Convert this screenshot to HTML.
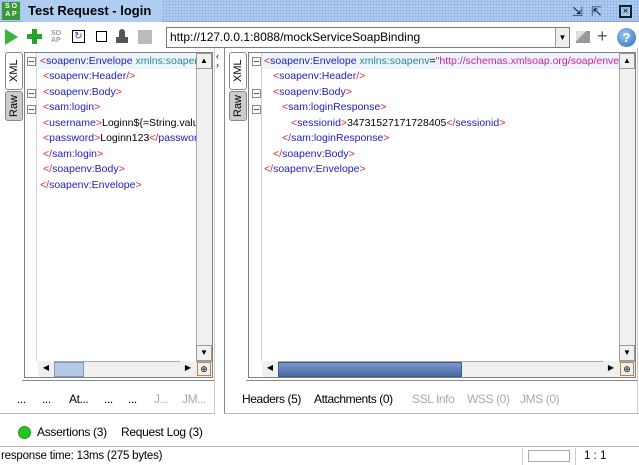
<!DOCTYPE html>
<html><head><style>
*{margin:0;padding:0;box-sizing:border-box}
body{width:639px;height:465px;background:#fff;font-family:"Liberation Sans","DejaVu Sans",sans-serif;font-size:11px;position:relative;overflow:hidden;color:#000}
.a{position:absolute}
.title{left:0;top:0;width:639px;height:22px;background:#aecdf0;background-image:radial-gradient(#8fb4e0 0.8px,transparent 1px);background-size:3px 3px;border-bottom:1px solid #8aa9d0}
.tt{left:22px;top:0;height:22px;width:140px;background:#aecdf0;font-weight:bold;font-size:13px;line-height:22px;padding-left:6px}
.ed{border:1px solid #808080;background:#fff}
.gut{border-right:1px solid #d0d0d0}
.ln{position:absolute;white-space:nowrap;font-size:10.5px;line-height:16px}
.t{color:#e02020}.n{color:#2020c0}.at{color:#2a8a8a}.v{color:#d020a0}
.box{position:absolute;width:9px;height:9px;border:1px solid #888;background:#fff}
.box:after{content:"";position:absolute;left:1px;top:3px;width:5px;height:1px;background:#555}
.vs{background:#f0f0f0;border-left:1px solid #aaa}
.btn{position:absolute;width:16px;height:16px;background:#f0f0f0;border:1px solid #999;font-size:8px;text-align:center;line-height:14px}
.vt{position:absolute;writing-mode:vertical-rl;transform:rotate(180deg);font-size:11px;text-align:center;border:1px solid #888;border-radius:3px}
.tab{position:absolute;font-size:12px;top:392px;letter-spacing:-0.4px;white-space:nowrap}
.g{color:#aaa}
</style></head><body>
<div class="a title"></div>
<div class="a" style="left:2px;top:2px;width:18px;height:18px;background:#3a9a3a;color:#fff;font-size:7px;font-weight:bold;line-height:8px;text-align:center;padding-top:1px">S O<br>A P</div>
<div class="a tt">Test Request - login</div>
<div class="a" style="left:572px;top:4px;font-size:13px;color:#123">⇲</div>
<div class="a" style="left:591px;top:4px;font-size:13px;color:#123">⇱</div>
<div class="a" style="left:619px;top:5px;width:13px;height:13px;border:2px solid #123;font-size:10px;line-height:9px;text-align:center">×</div>
<!-- toolbar -->
<div class="a" style="left:5px;top:29px;width:0;height:0;border-left:13px solid #3cb43c;border-top:8px solid transparent;border-bottom:8px solid transparent"></div>
<div class="a" style="left:27px;top:34px;width:15px;height:5px;background:#2ca02c"></div>
<div class="a" style="left:32px;top:29px;width:5px;height:15px;background:#2ca02c"></div>
<div class="a" style="left:51px;top:30px;font-size:7px;line-height:7px;color:#999;font-weight:bold">SO<br>AP</div>
<div class="a" style="left:72px;top:30px;width:13px;height:13px;border:1px solid #000;color:#2050a0;font-size:10px;line-height:11px;text-align:center">↻</div>
<div class="a" style="left:96px;top:31px;width:11px;height:11px;border:1px solid #000"></div>
<div class="a" style="left:119px;top:29px;width:6px;height:8px;background:#555;border-radius:3px 3px 0 0"></div>
<div class="a" style="left:116px;top:37px;width:12px;height:6px;background:#555"></div>
<div class="a" style="left:138px;top:30px;width:14px;height:14px;background:#bbb"></div>
<div class="a" style="left:166px;top:27px;width:404px;height:21px;border:1px solid #7a7a7a;font-size:12px;line-height:19px;padding-left:3px">http://127.0.0.1:8088/mockServiceSoapBinding</div>
<div class="a" style="left:555px;top:28px;width:14px;height:19px;border-left:1px solid #999;background:#eee;font-size:8px;text-align:center;line-height:19px">▼</div>
<div class="a" style="left:576px;top:31px;width:14px;height:12px;background:linear-gradient(135deg,#ddd 40%,#999 40%)"></div>
<div class="a" style="left:597px;top:26px;font-size:18px;color:#555">+</div>
<div class="a" style="left:617px;top:28px;width:19px;height:19px;border-radius:50%;background:radial-gradient(circle at 40% 35%,#9cc6f0,#2a6ab8);color:#fff;font-weight:bold;font-size:13px;text-align:center;line-height:19px">?</div>
<!-- left editor -->
<div class="vt" style="left:5px;top:52px;width:18px;height:38px;background:#fff;line-height:16px">XML</div>
<div class="vt" style="left:5px;top:91px;width:18px;height:30px;background:#ccc;line-height:16px">Raw</div>
<div class="a ed" style="left:24px;top:52px;width:189px;height:326px"></div>
<div class="a gut" style="left:25px;top:53px;width:12px;height:308px"></div>
<div class="a" style="left:38px;top:53px;width:158px;height:16px;background:#eef4fc"></div>
<div class="box" style="left:27px;top:57px"></div><div class="box" style="left:27px;top:89px"></div><div class="box" style="left:27px;top:105px"></div>
<div style="position:absolute;left:38px;top:53px;width:158px;height:300px;overflow:hidden">
<div class="ln" style="left:2px;top:0"><span class="t">&lt;</span><span class="n">soapenv:Envelope </span><span class="at">xmlns:soapenv</span></div>
<div class="ln" style="left:5px;top:15px"><span class="t">&lt;</span><span class="n">soapenv:Header</span><span class="t">/&gt;</span></div>
<div class="ln" style="left:5px;top:31px"><span class="t">&lt;</span><span class="n">soapenv:Body</span><span class="t">&gt;</span></div>
<div class="ln" style="left:5px;top:46px"><span class="t">&lt;</span><span class="n">sam:login</span><span class="t">&gt;</span></div>
<div class="ln" style="left:5px;top:62px"><span class="t">&lt;</span><span class="n">username</span><span class="t">&gt;</span>Loginn${=String.valueOf</div>
<div class="ln" style="left:5px;top:77px"><span class="t">&lt;</span><span class="n">password</span><span class="t">&gt;</span>Loginn123<span class="t">&lt;/</span><span class="n">password</span></div>
<div class="ln" style="left:5px;top:93px"><span class="t">&lt;/</span><span class="n">sam:login</span><span class="t">&gt;</span></div>
<div class="ln" style="left:5px;top:108px"><span class="t">&lt;/</span><span class="n">soapenv:Body</span><span class="t">&gt;</span></div>
<div class="ln" style="left:2px;top:124px"><span class="t">&lt;/</span><span class="n">soapenv:Envelope</span><span class="t">&gt;</span></div>
</div>
<div class="a vs" style="left:196px;top:53px;width:16px;height:308px"></div>
<div class="btn" style="left:196px;top:53px">▲</div><div class="btn" style="left:196px;top:345px">▼</div>
<div class="a" style="left:38px;top:361px;width:174px;height:16px;background:#f0f0f0;border-top:1px solid #aaa"></div>
<div class="btn" style="left:38px;top:361px;border:none">◀</div>
<div class="a" style="left:54px;top:362px;width:30px;height:15px;background:#b5c9e8;border:1px solid #7d97c0"></div>
<div class="btn" style="left:180px;top:361px;border:none">▶</div>
<div class="a" style="left:197px;top:362px;width:14px;height:14px;border:1px solid #c08040;font-size:9px;line-height:12px;text-align:center">⊕</div>
<div class="a" style="left:22px;top:380px;width:192px;height:1px;background:#888"></div>
<div class="a" style="left:214px;top:48px;width:1px;height:366px;background:#ccc"></div>
<div class="a" style="left:0;top:413px;width:215px;height:1px;background:#bbb"></div>
<div class="tab" style="left:17px">...</div><div class="tab" style="left:42px">...</div><div class="tab" style="left:69px">At...</div><div class="tab" style="left:104px">...</div><div class="tab" style="left:128px">...</div><div class="tab g" style="left:154px">J...</div><div class="tab g" style="left:182px">JM...</div>
<!-- splitter -->
<div class="a" style="left:216px;top:52px;font-size:9px;line-height:9px">‹<br>›</div>
<!-- right editor -->
<div class="a" style="left:224px;top:48px;width:1px;height:366px;background:#888"></div>
<div class="vt" style="left:229px;top:52px;width:18px;height:38px;background:#fff;line-height:16px">XML</div>
<div class="vt" style="left:229px;top:91px;width:18px;height:30px;background:#ccc;line-height:16px">Raw</div>
<div class="a ed" style="left:248px;top:52px;width:388px;height:326px"></div>
<div class="a gut" style="left:249px;top:53px;width:13px;height:308px"></div>
<div class="a" style="left:262px;top:53px;width:357px;height:16px;background:#eef4fc"></div>
<div class="box" style="left:252px;top:57px"></div><div class="box" style="left:252px;top:89px"></div><div class="box" style="left:252px;top:105px"></div>
<div style="position:absolute;left:262px;top:53px;width:357px;height:300px;overflow:hidden">
<div class="ln" style="left:2px;top:0"><span class="t">&lt;</span><span class="n">soapenv:Envelope </span><span class="at">xmlns:soapenv</span>=<span class="v">"http://schemas.xmlsoap.org/soap/envelope/"</span></div>
<div class="ln" style="left:11px;top:15px"><span class="t">&lt;</span><span class="n">soapenv:Header</span><span class="t">/&gt;</span></div>
<div class="ln" style="left:11px;top:31px"><span class="t">&lt;</span><span class="n">soapenv:Body</span><span class="t">&gt;</span></div>
<div class="ln" style="left:20px;top:46px"><span class="t">&lt;</span><span class="n">sam:loginResponse</span><span class="t">&gt;</span></div>
<div class="ln" style="left:29px;top:62px"><span class="t">&lt;</span><span class="n">sessionid</span><span class="t">&gt;</span>34731527171728405<span class="t">&lt;/</span><span class="n">sessionid</span><span class="t">&gt;</span></div>
<div class="ln" style="left:20px;top:77px"><span class="t">&lt;/</span><span class="n">sam:loginResponse</span><span class="t">&gt;</span></div>
<div class="ln" style="left:11px;top:93px"><span class="t">&lt;/</span><span class="n">soapenv:Body</span><span class="t">&gt;</span></div>
<div class="ln" style="left:2px;top:108px"><span class="t">&lt;/</span><span class="n">soapenv:Envelope</span><span class="t">&gt;</span></div>
</div>
<div class="a vs" style="left:619px;top:53px;width:16px;height:308px"></div>
<div class="btn" style="left:619px;top:53px">▲</div><div class="btn" style="left:619px;top:345px">▼</div>
<div class="a" style="left:262px;top:361px;width:373px;height:16px;background:#f0f0f0;border-top:1px solid #aaa"></div>
<div class="btn" style="left:262px;top:361px;border:none">◀</div>
<div class="a" style="left:278px;top:362px;width:184px;height:15px;background:linear-gradient(#7b98c8,#4a6aa5);border:1px solid #3a5a90"></div>
<div class="btn" style="left:603px;top:361px;border:none">▶</div>
<div class="a" style="left:620px;top:362px;width:14px;height:14px;border:1px solid #c08040;font-size:9px;line-height:12px;text-align:center">⊕</div>
<div class="a" style="left:246px;top:380px;width:392px;height:1px;background:#888"></div>
<div class="a" style="left:637px;top:48px;width:1px;height:366px;background:#ccc"></div>
<div class="a" style="left:224px;top:413px;width:415px;height:1px;background:#bbb"></div>
<div class="tab" style="left:242px">Headers (5)</div><div class="tab" style="left:314px">Attachments (0)</div><div class="tab g" style="left:412px">SSL Info</div><div class="tab g" style="left:467px">WSS (0)</div><div class="tab g" style="left:520px">JMS (0)</div>
<!-- bottom -->
<div class="a" style="left:18px;top:426px;width:13px;height:13px;border-radius:50%;background:#1ec81e;border:1px solid #3a8a3a"></div>
<div class="a" style="left:37px;top:425px;font-size:12px;letter-spacing:-0.3px">Assertions (3)</div>
<div class="a" style="left:121px;top:425px;font-size:12px;letter-spacing:-0.3px">Request Log (3)</div>
<div class="a" style="left:0;top:446px;width:639px;height:1px;background:#bbb"></div>
<div class="a" style="left:1px;top:450px;font-size:11.5px;letter-spacing:-0.2px">response time: 13ms (275 bytes)</div>
<div class="a" style="left:522px;top:448px;width:1px;height:17px;background:#ccc"></div>
<div class="a" style="left:528px;top:450px;width:42px;height:12px;border:1px solid #aaa"></div>
<div class="a" style="left:575px;top:448px;width:1px;height:17px;background:#ccc"></div>
<div class="a" style="left:584px;top:450px;font-size:11.5px">1 : 1</div>
</body></html>
